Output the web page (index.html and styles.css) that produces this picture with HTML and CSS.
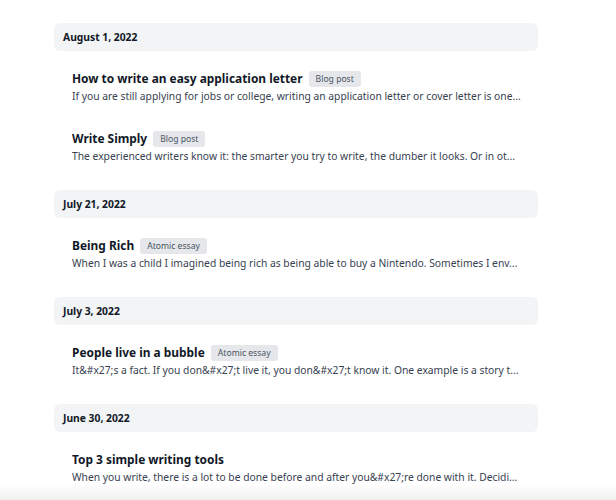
FILE: index.html
```html
<!DOCTYPE html>
<html lang="en">
<head>
  <meta charset="UTF-8" />
  <meta name="viewport" content="width=device-width, initial-scale=1" />
  <title>Posts</title>
  <link rel="stylesheet" href="styles.css">
</head>
<body>

  <div class="feed">
    <!-- August 1 -->
    <section class="day">
      <div class="day-head">August 1, 2022</div>
      <div class="post">
        <div class="post-title">How to write an easy application letter <span class="tag">Blog post</span></div>
        <div class="post-text">If you are still applying for jobs or college, writing an application letter or cover letter is one...</div>
      </div>
      <div class="post">
        <div class="post-title">Write Simply <span class="tag">Blog post</span></div>
        <div class="post-text">The experienced writers know it: the smarter you try to write, the dumber it looks. Or in ot...</div>
      </div>
    </section>

    <!-- July 21 -->
    <section class="day">
      <div class="day-head">July 21, 2022</div>
      <div class="post">
        <div class="post-title">Being Rich <span class="tag">Atomic essay</span></div>
        <div class="post-text">When I was a child I imagined being rich as being able to buy a Nintendo. Sometimes I env...</div>
      </div>
    </section>

    <!-- July 3 -->
    <section class="day">
      <div class="day-head">July 3, 2022</div>
      <div class="post">
        <div class="post-title">People live in a bubble <span class="tag">Atomic essay</span></div>
        <div class="post-text">It&amp;#x27;s a fact. If you don&amp;#x27;t live it, you don&amp;#x27;t know it. One example is a story t...</div>
      </div>
    </section>

    <!-- June 30 -->
    <section class="day">
      <div class="day-head">June 30, 2022</div>
      <div class="post">
        <div class="post-title">Top 3 simple writing tools</div>
        <div class="post-text">When you write, there is a lot to be done before and after you&amp;#x27;re done with it. Decidi...</div>
      </div>
    </section>
  </div>

  <div class="fade"></div>
</body>
</html>
```

FILE: styles.css
```css
body {
  font-family: 'Noto Sans', 'Open Sans', sans-serif;
  background: white;
  margin: 0;
  color: #111827;
}

.feed {
  width: 484px;
  margin-left: 54px;
  padding-top: 23px;
}

.day {
  margin-bottom: 14px;
}

.day-head {
  background: #f3f4f6;
  border-radius: 6px;
  height: 28px;
  line-height: 28px;
  padding: 0 9px;
  font-size: 10.3px;
  font-weight: 700;
  margin-bottom: 5px;
}

.post {
  padding: 12px 18px 14px;
  height: 34px;
}

.post-title {
  font-size: 11.9px;
  font-weight: 700;
  line-height: 20px;
  white-space: nowrap;
}

.tag {
  display: inline-block;
  background: #e5e7eb;
  color: #4b5563;
  font-size: 8.6px;
  font-weight: 400;
  line-height: 16px;
  padding: 0 7px;
  border-radius: 3px;
  margin-left: 3px;
  vertical-align: 1px;
}

.post-text {
  font-size: 10.3px;
  line-height: 16px;
  color: #374151;
  white-space: nowrap;
}

.fade {
  position: fixed;
  left: 0;
  right: 0;
  bottom: 0;
  height: 16px;
  background: linear-gradient(rgba(240, 240, 240, 0), rgba(240, 240, 240, 1));
}
```
